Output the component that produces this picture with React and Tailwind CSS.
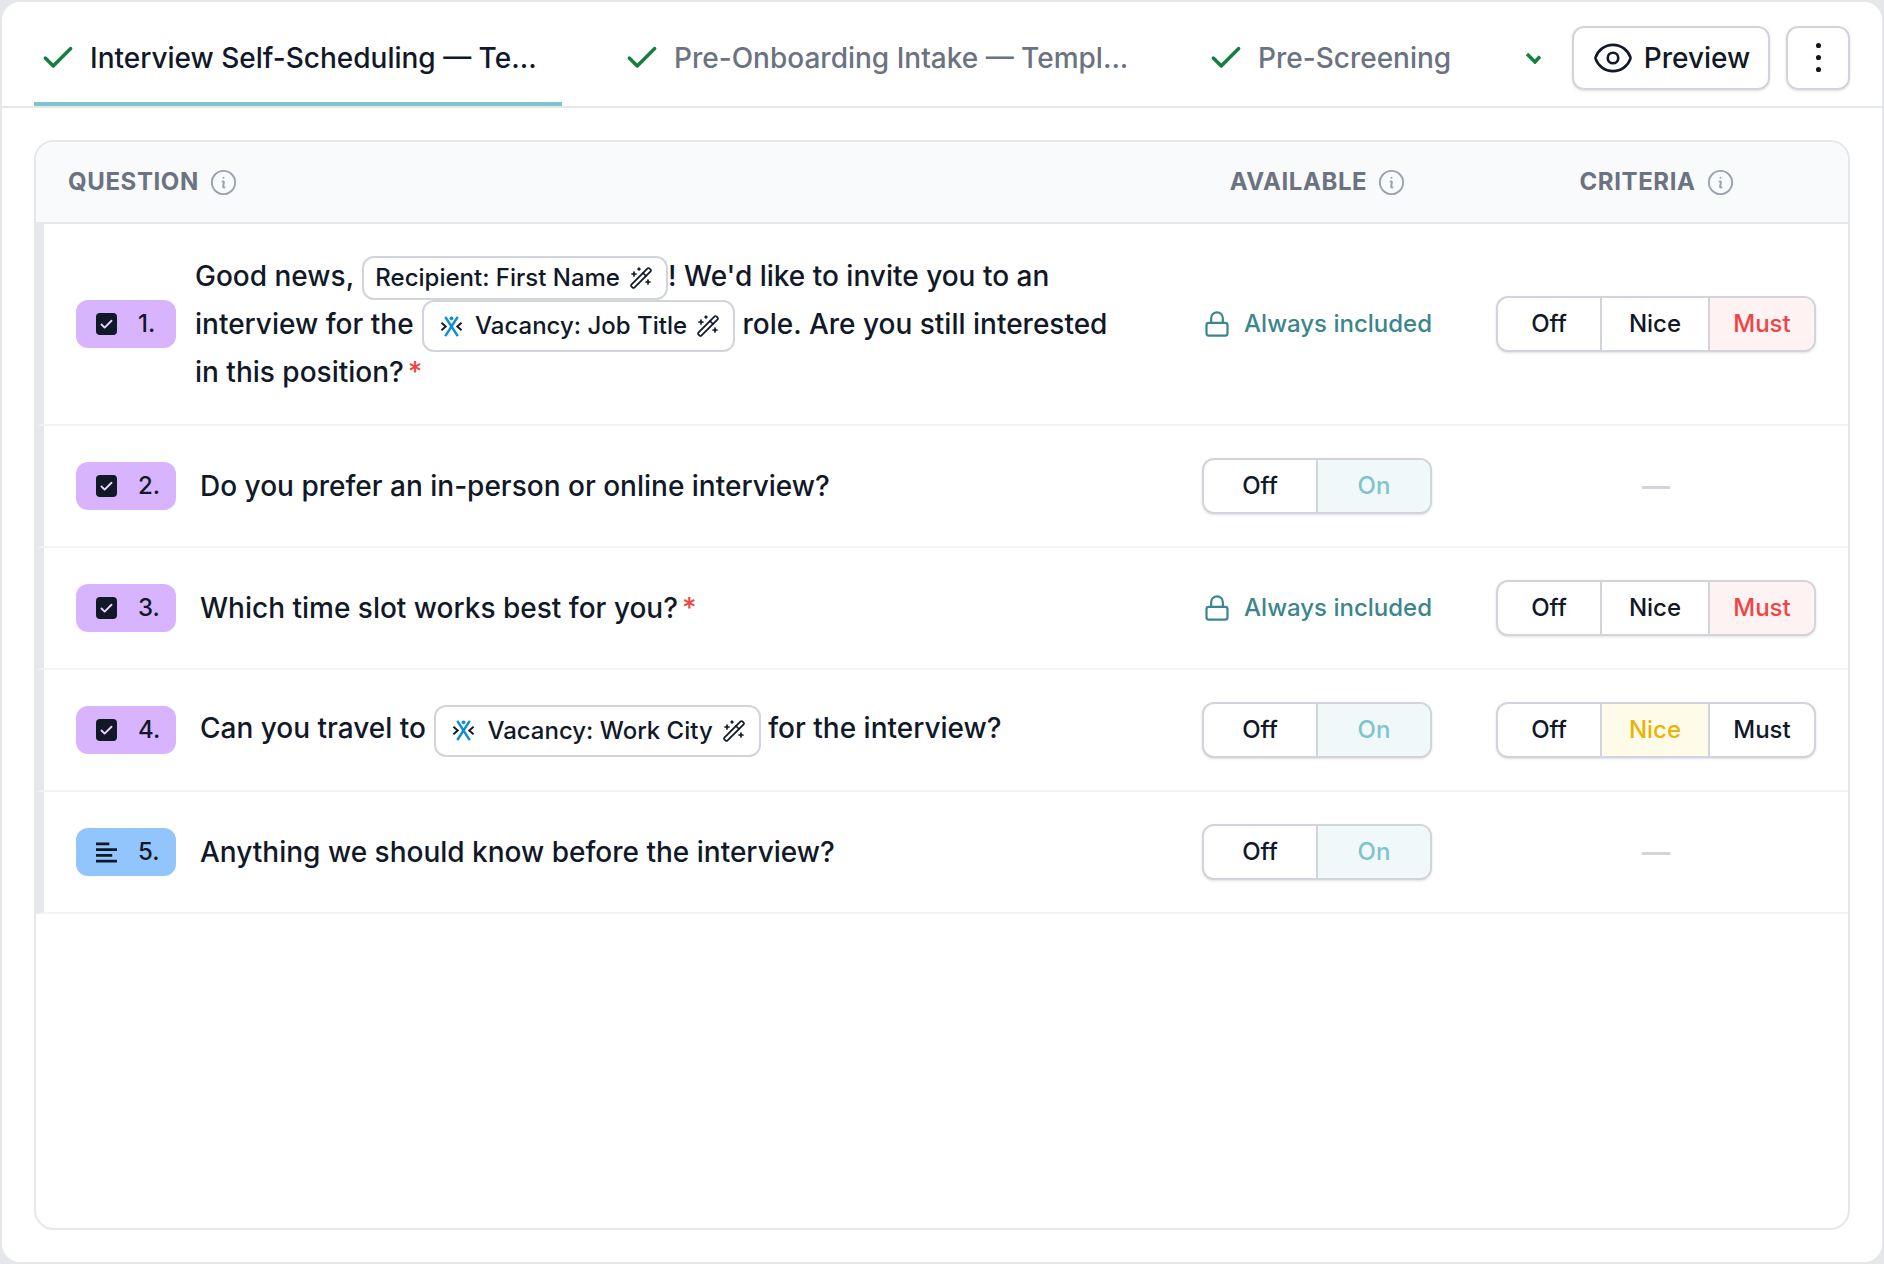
import { Check, Lock, EllipsisVertical, WandSparkles } from "lucide-react";
import { HiOutlineEye, HiOutlineInformationCircle } from "react-icons/hi2";

function Logo() {
  return (
    <svg viewBox="0 0 24 24" className="w-[23px] h-[23px] shrink-0">
      <circle cx="12" cy="3.5" r="2" fill="#0b8fd6" />
      <path d="M5.500 2 18.500 22M18.500 2 5.500 22" stroke="#0b8fd6" strokeWidth="2.600" fill="none" />
      <path d="M1.500 8 6 12l-4.500 4M22.500 8 18 12l4.500 4" stroke="#111827" strokeWidth="2" fill="none" />
    </svg>
  );
}

function Token({ label, logo }) {
  return (
    <span className={`inline-flex items-center align-middle ml-[1px] rounded-[12px] border-2 border-[#d1d5db] bg-white text-[24px] font-medium text-[#111827] ${logo ? "h-[52px] -my-[4px] gap-[12px] pl-[16px] pr-[13px]" : "h-[44px] gap-[9px] pl-[11px] pr-[13px]"}`}>
      {logo && <Logo />}
      {label}
      <WandSparkles className={`w-[24px] h-[24px] ${logo ? "-ml-[3px]" : ""}`} strokeWidth={1.7} />
    </span>
  );
}

function Badge({ n, kind = "check" }) {
  return (
    <div className={`w-[100px] h-[48px] rounded-[12px] flex items-center gap-[21px] pl-[20px] shrink-0 text-[24px] font-medium text-[#111827] ${kind === "check" ? "bg-[#d8b4fe]" : "bg-[#93c5fd]"}`}>
      {kind === "check" ? (
        <span className="w-[21px] h-[22px] rounded-[4px] bg-[#111827] flex items-center justify-center">
          <Check className="w-[15px] h-[15px] text-[#e9d5ff]" strokeWidth={3} />
        </span>
      ) : (
        <svg viewBox="0 0 22 22" className="w-[21px] h-[21px]" fill="none" stroke="#111827" strokeWidth="2.800">
          <path d="M0 2h14M0 8h22M0 14h17M0 20h22" />
        </svg>
      )}
      {n}.
    </div>
  );
}

function Segmented({ items, active, activeClass, widths }) {
  return (
    <div className="flex h-[56px] rounded-[12px] border-2 border-[#d1d5db] bg-white shadow-sm overflow-hidden text-[24px] font-medium text-[#111827]">
      {items.map((item, i) => (
        <div
          key={item}
          className={`flex items-center justify-center ${widths[i]} ${i > 0 ? "border-l-2 border-[#d1d5db]" : ""} ${item === active ? activeClass : ""}`}
        >
          {item}
        </div>
      ))}
    </div>
  );
}

function Available({ value }) {
  if (value === "always") {
    return (
      <div className="flex items-center justify-end gap-[13px] text-[24px] font-medium text-[#3b868c] whitespace-nowrap">
        <Lock className="w-[28px] h-[28px]" strokeWidth={1.9} />
        Always included
      </div>
    );
  }
  return (
    <Segmented
      items={["Off", "On"]}
      active="On"
      activeClass="bg-[#f0f8fa] text-[#7fc4cb]"
      widths={["w-[112px]", "flex-1"]}
    />
  );
}

function Criteria({ value }) {
  if (!value) return <div className="text-center text-[28px] font-semibold text-[#d1d5db]">—</div>;
  return (
    <Segmented
      items={["Off", "Nice", "Must"]}
      active={value}
      activeClass={value === "Must" ? "bg-[#fef2f2] text-[#ef4444]" : "bg-[#fefce8] text-[#eab308]"}
      widths={["w-[102px]", "w-[108px]", "flex-1"]}
    />
  );
}

function Row({ n, kind, available, criteria, children, tall }) {
  return (
    <div className={`flex items-center border-b-2 border-[#f3f4f6] border-l-8 border-l-[#e5e7eb] pl-[32px] pr-[32px] ${tall ? "h-[202px]" : "h-[122px]"}`}>
      <Badge n={n} kind={kind} />
      <div className={`flex-1 min-w-0 text-[28px] font-medium text-[#111827] ${tall ? "pl-[19px] pr-[80px] leading-[48px]" : "pl-[24px]"}`}>
        {children}
      </div>
      <div className="w-[230px] shrink-0"><Available value={available} /></div>
      <div className="w-[320px] ml-[64px] shrink-0"><Criteria value={criteria} /></div>
    </div>
  );
}

function Tab({ label, active, className }) {
  return (
    <div className={`h-full flex items-center gap-[13px] pl-[5px] whitespace-nowrap text-[28px] font-medium ${active ? "text-[#111827] border-b-4 border-[#7fc4cb] pt-[12px]" : "text-[#6b7280] pt-[8px]"} ${className}`}>
      <Check className="w-[38px] h-[38px] text-[#15803d]" strokeWidth={2.2} />
      {label}
    </div>
  );
}

function HeadCell({ label, className }) {
  return (
    <div className={`flex items-center gap-[9px] text-[24px] font-bold tracking-[0.6px] uppercase text-[#6b7280] ${className}`}>
      {label}
      <HiOutlineInformationCircle className="w-[31px] h-[31px] text-[#9ca3af]" />
    </div>
  );
}

export default function App() {
  return (
    <div className="w-[1884px] h-[1264px] bg-[#e5e7eb] overflow-hidden" style={{ fontFamily: "Inter, sans-serif" }}>
      <div className="h-full border-2 border-[#e5e7eb] rounded-[20px] bg-white flex flex-col">
        <div className="h-[106px] shrink-0 border-b-2 border-[#e5e7eb] flex items-center pl-[32px] pr-[32px]">
          <div className="flex-1 min-w-0 h-full flex overflow-hidden">
            <Tab label="Interview Self-Scheduling — Te..." active className="w-[528px] shrink-0" />
            <Tab label="Pre-Onboarding Intake — Templ..." className="ml-[56px] w-[527px] shrink-0" />
            <Tab label="Pre-Screening" className="ml-[57px] shrink-0" />
            <div className="ml-[75px] h-full w-[15px] shrink-0 flex items-center pt-[8px] overflow-hidden">
              <svg viewBox="0 0 15 12" className="w-[15px] h-[12px] text-[#15803d]" fill="none" stroke="currentColor" strokeWidth="3.500">
                <path d="M1 2l8 8 5-5.500" />
              </svg>
            </div>
          </div>
          <button className="ml-[8px] mt-[7px] h-[64px] w-[198px] rounded-[12px] border-2 border-[#d1d5db] shadow-sm flex items-center justify-center gap-[10px] text-[28px] font-medium text-[#111827]">
            <HiOutlineEye className="w-[42px] h-[42px]" />
            Preview
          </button>
          <button className="ml-[16px] mt-[7px] h-[64px] w-[64px] rounded-[12px] border-2 border-[#d1d5db] shadow-sm flex items-center justify-center text-[#111827]">
            <EllipsisVertical className="w-[41px] h-[41px]" strokeWidth={1} fill="currentColor" />
          </button>
        </div>
        <div className="flex-1 pt-[32px] pb-[32px] pl-[32px] pr-[32px]">
          <div className="h-full rounded-[20px] border-2 border-[#e5e7eb] overflow-hidden">
            <div className="h-[82px] bg-[#f9fafb] border-b-2 border-[#e5e7eb] flex items-center pl-[32px] pr-[32px]">
              <HeadCell label="Question" className="flex-1" />
              <HeadCell label="Available" className="w-[230px] justify-center pl-[3px]" />
              <HeadCell label="Criteria" className="w-[320px] ml-[64px] justify-center pl-[3px]" />
            </div>
            <Row n={1} tall available="always" criteria="Must">
              Good news, <Token label="Recipient: First Name" />! We'd like to invite you to an interview for the <Token logo label="Vacancy: Job Title" /> role. Are you still interested in this position?<span className="text-[#ef4444] ml-[4px]">*</span>
            </Row>
            <Row n={2} available="toggle">Do you prefer an in-person or online interview?</Row>
            <Row n={3} available="always" criteria="Must">Which time slot works best for you?<span className="text-[#ef4444] ml-[4px]">*</span></Row>
            <Row n={4} available="toggle" criteria="Nice">
              Can you travel to <Token logo label="Vacancy: Work City" /> for the interview?
            </Row>
            <Row n={5} kind="text" available="toggle">Anything we should know before the interview?</Row>
          </div>
        </div>
      </div>
    </div>
  );
}
